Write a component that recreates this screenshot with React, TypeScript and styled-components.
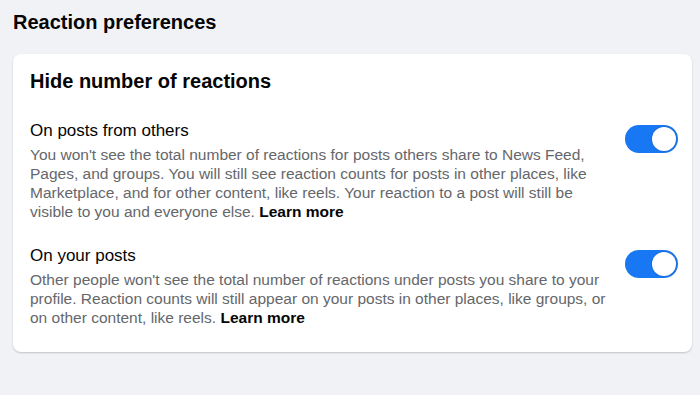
import styled, { createGlobalStyle } from 'styled-components'

const GlobalStyle = createGlobalStyle`
  html, body {
    margin: 0;
    padding: 0;
    background: #f0f2f5;
    font-family: "Liberation Sans", Arial, sans-serif;
    color: #050505;
  }
`

const Page = styled.div`
  width: 700px;
  height: 395px;
  padding: 10px 8px 0 13px;
  box-sizing: border-box;
`

const PageTitle = styled.h1`
  margin: 0 0 20px;
  font-size: 20px;
  font-weight: 700;
  line-height: 24px;
`

const Card = styled.div`
  background: #fff;
  border-radius: 8px;
  box-shadow: 0 1px 2px rgba(0, 0, 0, 0.2);
  padding: 14px 14px 25px 17px;
`

const CardTitle = styled.h2`
  margin: 0 0 26px;
  font-size: 20px;
  font-weight: 700;
  line-height: 26px;
`

const Section = styled.div`
  display: flex;
  align-items: flex-start;
  gap: 14px;
  & + & {
    margin-top: 24px;
  }
`

const SectionText = styled.div`
  flex: 1;
`

const SectionTitle = styled.div`
  font-size: 17px;
  line-height: 22px;
  margin-bottom: 3px;
`

const Description = styled.div`
  font-size: 15.5px;
  line-height: 19px;
  color: #65676b;
`

const LearnMore = styled.a`
  color: #050505;
  font-weight: 700;
  text-decoration: none;
`

const Switch = styled.div<{ $on: boolean }>`
  flex: none;
  width: 53px;
  height: 28px;
  margin-top: 5px;
  border-radius: 14px;
  background: ${p => (p.$on ? '#1877f2' : '#ccd0d5')};
  display: flex;
  align-items: center;
  justify-content: ${p => (p.$on ? 'flex-end' : 'flex-start')};
  padding: 0 2px;
  box-sizing: border-box;
`

const Knob = styled.div`
  width: 24px;
  height: 24px;
  border-radius: 50%;
  background: #fff;
  box-shadow: 0 0 0 1px #1b6fd8;
`

const sections = [
  {
    title: 'On posts from others',
    text: "You won't see the total number of reactions for posts others share to News Feed, Pages, and groups. You will still see reaction counts for posts in other places, like Marketplace, and for other content, like reels. Your reaction to a post will still be visible to you and everyone else.",
  },
  {
    title: 'On your posts',
    text: "Other people won't see the total number of reactions under posts you share to your profile. Reaction counts will still appear on your posts in other places, like groups, or on other content, like reels.",
  },
]

export default function App() {
  return (
    <>
      <GlobalStyle />
      <Page>
        <PageTitle>Reaction preferences</PageTitle>
        <Card>
          <CardTitle>Hide number of reactions</CardTitle>
          {sections.map(s => (
            <Section key={s.title}>
              <SectionText>
                <SectionTitle>{s.title}</SectionTitle>
                <Description>
                  {s.text} <LearnMore href="#">Learn more</LearnMore>
                </Description>
              </SectionText>
              <Switch $on>
                <Knob />
              </Switch>
            </Section>
          ))}
        </Card>
      </Page>
    </>
  )
}
